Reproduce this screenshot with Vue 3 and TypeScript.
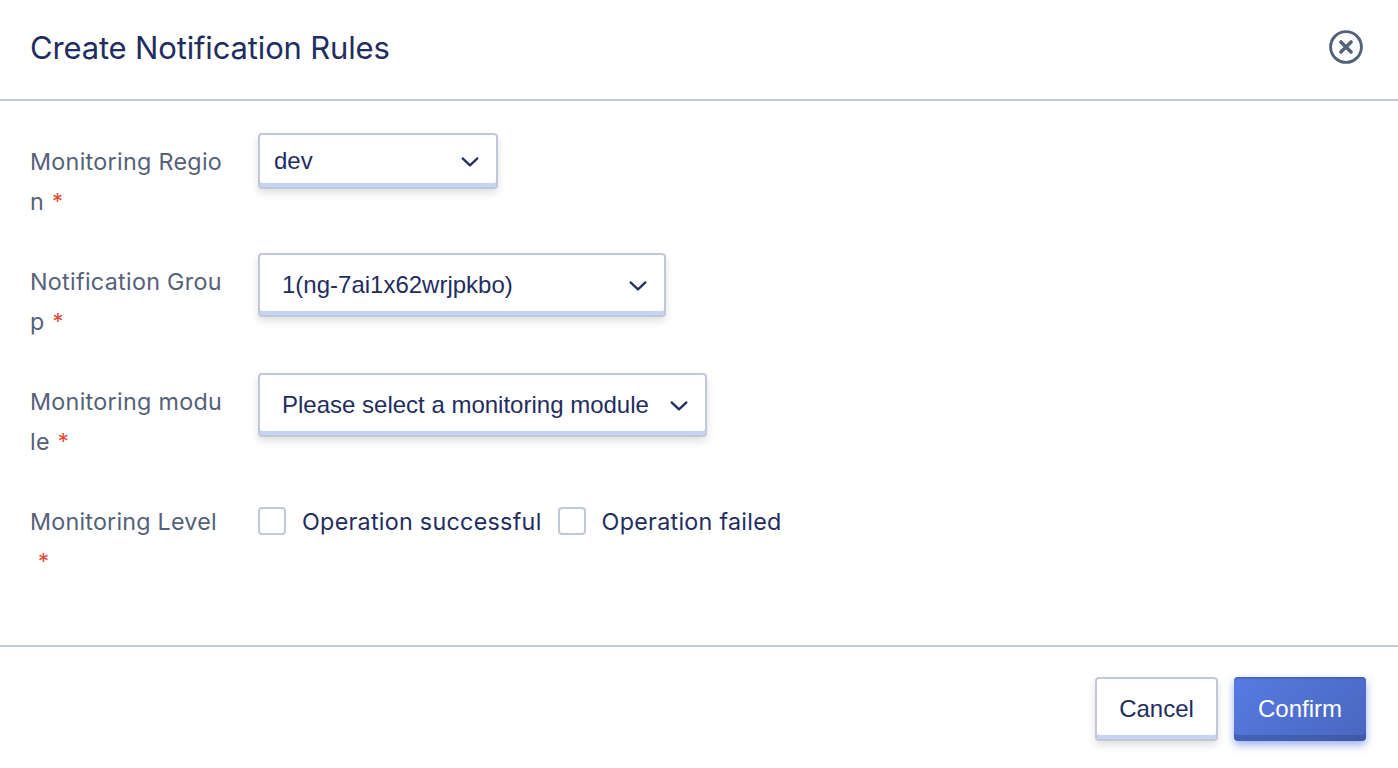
<script setup lang="ts">
import { ref } from 'vue'

interface SelectField {
  lines: [string, string]
  value: string
  size: string
}

const fields: SelectField[] = [
  { lines: ['Monitoring Regio', 'n'], value: 'dev', size: 'small' },
  { lines: ['Notification Grou', 'p'], value: '1(ng-7ai1x62wrjpkbo)', size: 'medium' },
  { lines: ['Monitoring modu', 'le'], value: 'Please select a monitoring module', size: 'large' },
]

const levels = ref([
  { text: 'Operation successful', checked: false },
  { text: 'Operation failed', checked: false },
])
</script>

<template>
  <div class="dialog">
    <header class="header">
      <h1 class="title">Create Notification Rules</h1>
      <button class="close" type="button" aria-label="Close">
        <svg width="36" height="36" viewBox="0 0 36 36" fill="none" stroke="#556178">
          <circle cx="18" cy="18" r="15.4" stroke-width="2.9" />
          <path d="M12.9 12.9L23.1 23.1M23.1 12.9L12.9 23.1" stroke-width="3.5" stroke-linecap="round" />
        </svg>
      </button>
    </header>

    <main class="body">
      <div v-for="(field, i) in fields" :key="i" class="row">
        <div class="label">
          <span>{{ field.lines[0] }}</span><br />
          <span>{{ field.lines[1] }}</span><span class="star">*</span>
        </div>
        <div class="select" :class="field.size">
          <span class="value">{{ field.value }}</span>
          <svg class="chevron" width="20" height="12" viewBox="0 0 20 12" fill="none" stroke="#1f2d5f">
            <path d="M2.6 2.4L10 9.4L17.4 2.4" stroke-width="2.2" stroke-linecap="round" stroke-linejoin="round" />
          </svg>
        </div>
      </div>
      <div class="row">
        <div class="label">
          <span class="level">Monitoring Level</span><br />
          <span class="star">*</span>
        </div>
        <div class="checks">
          <label v-for="level in levels" :key="level.text" class="check">
            <input v-model="level.checked" type="checkbox" class="box" />
            <span>{{ level.text }}</span>
          </label>
        </div>
      </div>
    </main>

    <footer class="footer">
      <button type="button" class="btn cancel">Cancel</button>
      <button type="button" class="btn confirm">Confirm</button>
    </footer>
  </div>
</template>

<style>
body {
  margin: 0;
  background: #fff;
}
</style>

<style scoped>
* {
  box-sizing: border-box;
}
.dialog {
  width: 1398px;
  height: 768px;
  display: flex;
  flex-direction: column;
  background: #fff;
  font-family: Inter, "Liberation Sans", sans-serif;
  color: #1f2d5f;
  overflow: hidden;
}
.header {
  height: 101px;
  flex: none;
  display: flex;
  justify-content: space-between;
  align-items: flex-start;
  padding: 29px 34px 0 30px;
  border-bottom: 2px solid #c3c8d9;
}
.title {
  margin: 0;
  font-size: 31px;
  line-height: 38px;
  font-weight: 400;
  letter-spacing: -0.16px;
  white-space: nowrap;
}
.close {
  border: 0;
  padding: 0;
  background: none;
  width: 36px;
  height: 36px;
}
.close svg {
  display: block;
}
.body {
  flex: 1;
  padding: 32px 30px 0;
}
.row {
  height: 120px;
  display: flex;
  align-items: flex-start;
}
.label {
  width: 228px;
  flex: none;
  padding-top: 9px;
  font-size: 23.3px;
  line-height: 40px;
  letter-spacing: 0.3px;
  color: #556178;
  white-space: nowrap;
}
.level {
  letter-spacing: 0.22px;
}
.star {
  position: relative;
  top: -1px;
  margin-left: 8px;
  color: #e54a35;
  font-size: 22px;
}
.select {
  display: flex;
  align-items: center;
  justify-content: space-between;
  border: 2px solid #c3c8d9;
  border-radius: 4px;
  background: #fff;
  box-shadow: inset 0 -4px 0 #c5d3f5, 0 4px 8px rgba(0, 0, 0, 0.13);
  font-family: "Liberation Sans", Arial, sans-serif;
  font-size: 24px;
  white-space: nowrap;
}
.small {
  width: 240px;
  height: 56px;
  padding: 0 16px 0 14px;
}
.medium {
  width: 408px;
  height: 64px;
  padding: 0 16px 0 22px;
}
.large {
  width: 449px;
  height: 64px;
  padding: 0 16px 0 22px;
}
.chevron {
  flex: none;
  margin-top: 2px;
}
.checks {
  display: flex;
  gap: 16px;
  padding-top: 9px;
}
.check {
  display: flex;
  align-items: center;
  font-size: 23.3px;
  line-height: 40px;
  letter-spacing: 0.28px;
  white-space: nowrap;
}
.box {
  appearance: none;
  width: 28px;
  height: 28px;
  margin: 0 16px 2px 0;
  border: 2px solid #c3c8d9;
  border-radius: 4px;
  background: #fff;
}
.footer {
  height: 123px;
  flex: none;
  display: flex;
  justify-content: flex-end;
  gap: 16px;
  padding: 30px 32px 0 0;
  border-top: 2px solid #c3c8d9;
}
.btn {
  height: 64px;
  padding: 0;
  border-radius: 4px;
  font-family: "Liberation Sans", Arial, sans-serif;
  font-size: 24px;
}
.cancel {
  width: 123px;
  border: 2px solid #c3c8d9;
  background: #fff;
  color: #1f2d5f;
  box-shadow: inset 0 -4px 0 #c5d3f5, 0 4px 8px rgba(0, 0, 0, 0.13);
}
.confirm {
  width: 132px;
  border: 0;
  color: #fff;
  background: linear-gradient(135deg, #567be2, #4a66be);
  box-shadow: inset 0 2px 0 rgba(54, 77, 148, 0.4), inset 0 -6px 0 rgba(54, 77, 148, 0.5), 0 4px 8px rgba(75, 108, 222, 0.55);
}
</style>
